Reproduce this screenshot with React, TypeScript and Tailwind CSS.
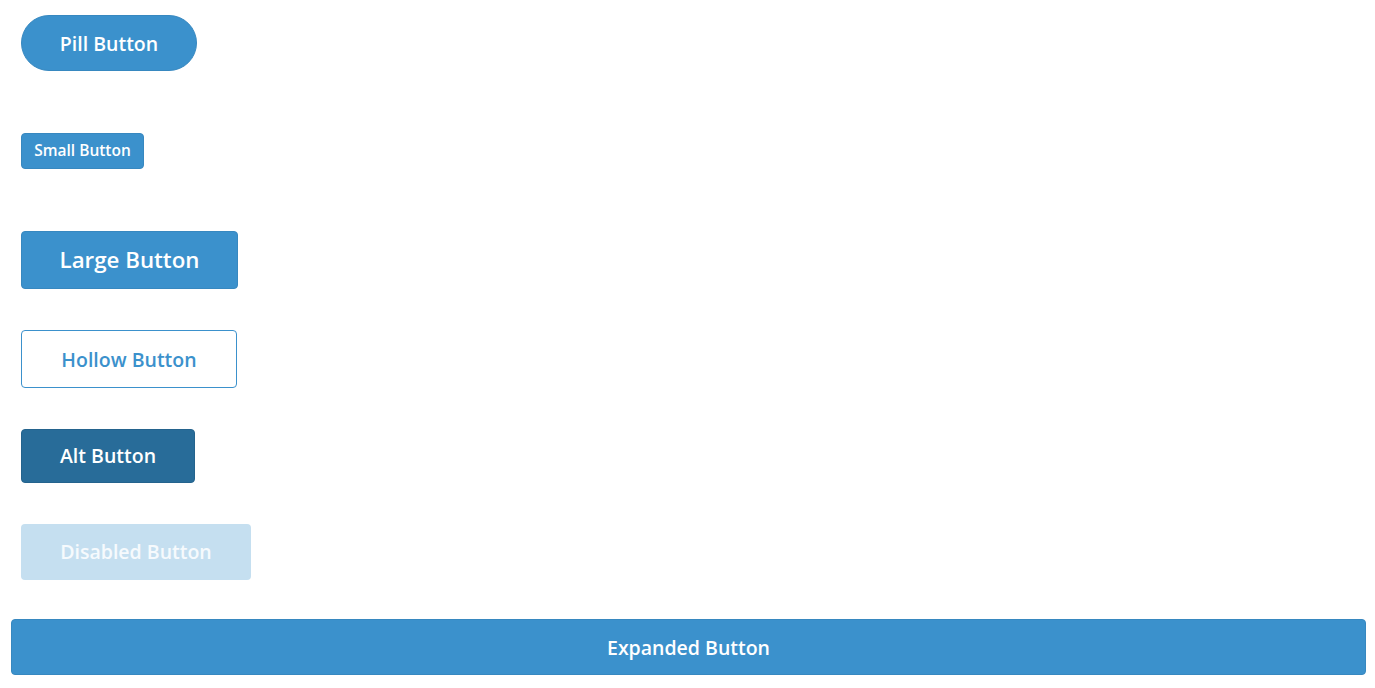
const font = { fontFamily: '"Open Sans", "Liberation Sans", sans-serif' }

export default function App() {
  return (
    <div className="min-h-screen bg-white px-[11px] pt-[15px]" style={font}>
      <div className="flex flex-col items-start">
        <button className="ml-[10px] h-[56px] w-[176px] rounded-full border border-[#3788c0] bg-[#3b91cc] pt-px text-[19.5px] font-semibold text-white">
          Pill Button
        </button>
        <button className="ml-[10px] mt-[62px] h-[36px] w-[123px] rounded-[4px] border border-[#3788c0] bg-[#3b91cc] text-[15.5px] font-semibold text-white">
          Small Button
        </button>
        <button className="ml-[10px] mt-[62px] h-[58px] w-[217px] rounded-[4px] border border-[#3788c0] bg-[#3b91cc] text-[22.3px] font-semibold text-white">
          Large Button
        </button>
        <button className="ml-[10px] mt-[41px] h-[58px] w-[216px] rounded-[4px] border border-[#3b91cc] bg-white pt-px text-[19.5px] font-semibold text-[#3b91cc]">
          Hollow Button
        </button>
        <button className="ml-[10px] mt-[41px] h-[54px] w-[174px] rounded-[4px] border border-[#24638d] bg-[#286c99] text-[19.5px] font-semibold text-white">
          Alt Button
        </button>
        <button className="ml-[10px] mt-[41px] h-[56px] w-[230px] cursor-not-allowed rounded-[4px] bg-[#c5dff0] text-[19.5px] font-semibold text-white/85">
          Disabled Button
        </button>
        <button className="mt-[39px] h-[56px] w-[1355px] rounded-[4px] border border-[#3788c0] bg-[#3b91cc] pt-px text-[19.5px] font-semibold text-white">
          Expanded Button
        </button>
      </div>
    </div>
  )
}
